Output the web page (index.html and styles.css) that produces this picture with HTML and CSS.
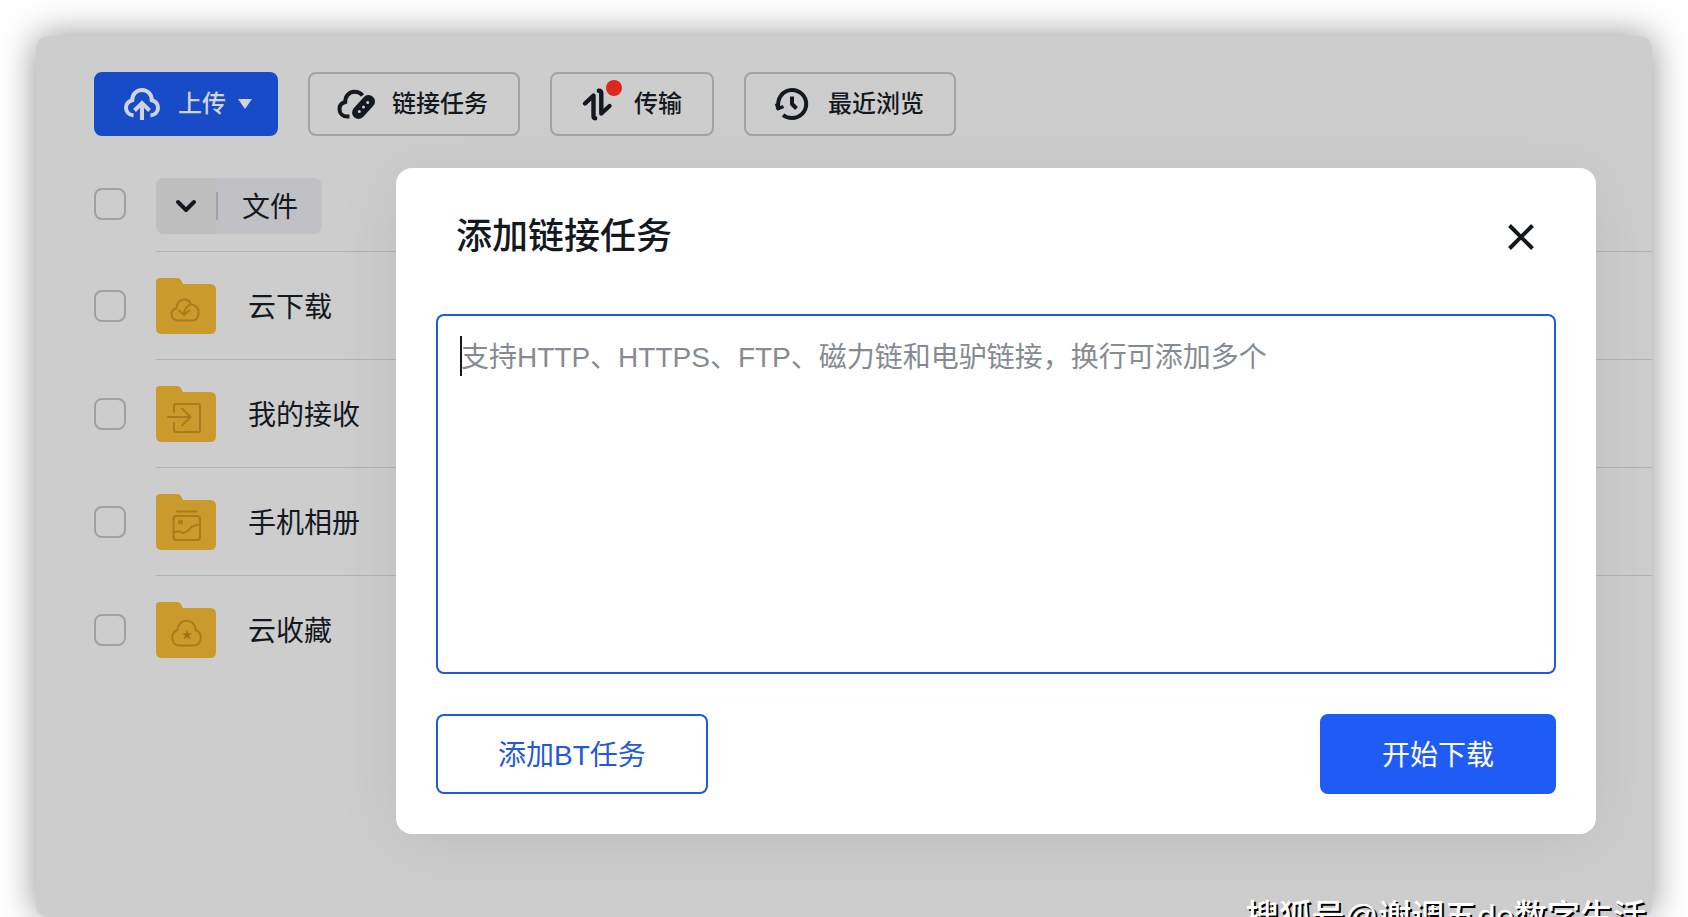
FILE: index.html
```html
<!DOCTYPE html>
<html lang="zh-CN">
<head>
<meta charset="utf-8">
<meta name="viewport" content="width=device-width, initial-scale=1">
<title>添加链接任务</title>
<link rel="stylesheet" href="styles.css">
</head>
<body>
<div class="window">
  <nav class="toolbar">
    <button class="tool tool-primary" type="button">
      <svg class="icon" viewBox="0 0 36 36" fill="none" stroke="currentColor" stroke-width="4">
        <path d="M9.500 29.600C5 29 2 25.800 2 21.800C2 18 4.600 15 8.200 14.200C8.200 8.200 12.400 3.900 18 3.900C23.600 3.900 27.800 8.200 27.800 14.200C31.400 15 34 18 34 21.800C34 25.800 31 29 26.500 29.600"/>
        <path d="M18 34V18.500M10.500 24.500L18 17L25.500 24.500"/>
      </svg>
      <span>上传</span>
      <svg class="caret" viewBox="0 0 16 12"><path d="M0 1H14L7 11Z" fill="currentColor"/></svg>
    </button>
    <button class="tool" type="button">
      <svg class="icon" viewBox="0 0 36 36" fill="none" stroke="currentColor" stroke-width="4">
        <path d="M11.500 30.500H9.500C5 30.500 1.500 27.500 1.500 23.200C1.500 19.200 4.200 16.700 7.200 16C7.200 10 11.300 5.800 16.500 5.800C20 5.800 22.800 7.200 24.500 9.500"/>
        <path d="M20.500 26.500L30.500 15.500" stroke-width="13" stroke-linecap="round"/>
        <path class="bead" d="M29.700 16.400V16.400M25.500 21V21M21.300 25.600V25.600"/>
      </svg>
      <span>链接任务</span>
    </button>
    <button class="tool" type="button">
      <span class="icon-wrap">
        <svg class="icon" viewBox="0 0 36 36" fill="none" stroke="currentColor" stroke-width="4.400" stroke-linejoin="round" stroke-linecap="round">
          <path d="M5 17.500L13.500 9.500V29.500C13.500 31.500 14 32.200 15.200 32.200"/>
          <path d="M18.800 4.800C20.500 4.800 21.300 5.500 21.300 7.500V27.500L29.500 20"/>
        </svg>
        <span class="dot"></span>
      </span>
      <span>传输</span>
    </button>
    <button class="tool" type="button">
      <svg class="icon" viewBox="0 0 36 36" fill="none" stroke="currentColor" stroke-width="4" stroke-linejoin="round">
        <path d="M4.500 22.500C2.500 13 8.500 4 18 4C26 4 32.200 10.300 32.200 18C32.200 25.700 26 32 18 32C14.500 32 11.500 31 9 29"/>
        <path d="M2.500 17.500L4 22.800L9.500 20.500" stroke-width="3.400"/>
        <path d="M18 10.500V18L22.500 22.500"/>
      </svg>
      <span>最近浏览</span>
    </button>
  </nav>

  <main class="files">
    <div class="row row-head">
      <input class="check" type="checkbox" aria-label="全选">
      <div class="cell">
        <div class="crumb">
          <button class="crumb-toggle" type="button" aria-label="展开">
            <svg class="chevron" viewBox="0 0 24 16" fill="none" stroke="currentColor" stroke-width="4"><path d="M4 4L12 12L20 4" stroke-linecap="round" stroke-linejoin="round"/></svg>
          </button>
          <button class="crumb-name" type="button">文件</button>
        </div>
      </div>
    </div>
    <div class="row">
      <input class="check" type="checkbox" id="f1">
      <label class="cell" for="f1">
        <svg class="folder" viewBox="0 0 60 56"><path class="folder-body" d="M0 4Q0 0 4 0H21Q24 0 25.500 3L27 6H54Q60 6 60 12V50Q60 56 54 56H6Q0 56 0 50Z"/>
          <g class="folder-mark"><path d="M31 29C33 26.500 36 26 38.500 27.500C42 29.500 43 33 42.500 36C42 40 39.500 42.500 36 42.500H22.500C18.500 42.500 15.500 40 15.500 36.500C15.500 33.500 17.500 31 20.500 30.500C20.500 25.500 23.500 21.500 28 21.500C31.500 21.500 34 23.500 35 26.500"/><path d="M31 29C29 30.500 28 32.500 28 37M23 32.500L28 37L33 32.500"/></g></svg>
        <span class="name">云下载</span>
      </label>
    </div>
    <div class="row">
      <input class="check" type="checkbox" id="f2">
      <label class="cell" for="f2">
        <svg class="folder" viewBox="0 0 60 56"><path class="folder-body" d="M0 4Q0 0 4 0H21Q24 0 25.500 3L27 6H54Q60 6 60 12V50Q60 56 54 56H6Q0 56 0 50Z"/>
          <g class="folder-mark"><path d="M18 26V20Q18 18 20 18H42Q44 18 44 20V44Q44 46 42 46H20Q18 46 18 44V37"/><path d="M12 31H34M26 22.500L34.500 31L26 39.500"/></g></svg>
        <span class="name">我的接收</span>
      </label>
    </div>
    <div class="row">
      <input class="check" type="checkbox" id="f3">
      <label class="cell" for="f3">
        <svg class="folder" viewBox="0 0 60 56"><path class="folder-body" d="M0 4Q0 0 4 0H21Q24 0 25.500 3L27 6H54Q60 6 60 12V50Q60 56 54 56H6Q0 56 0 50Z"/>
          <g class="folder-mark"><path d="M21 17.500H41"/><rect x="17.500" y="22" width="26.500" height="24" rx="3"/><path d="M18 38.500C22 36.500 24 37 27 39C31 38.500 33 36 35 33.500C37.500 31.500 40 31 44 30.500"/><circle cx="24.500" cy="28" r="1.500"/></g></svg>
        <span class="name">手机相册</span>
      </label>
    </div>
    <div class="row row-last">
      <input class="check" type="checkbox" id="f4">
      <label class="cell" for="f4">
        <svg class="folder" viewBox="0 0 60 56"><path class="folder-body" d="M0 4Q0 0 4 0H21Q24 0 25.500 3L27 6H54Q60 6 60 12V50Q60 56 54 56H6Q0 56 0 50Z"/>
          <g class="folder-mark"><path d="M21.500 28C21.500 22.500 25.500 18.700 30.500 18.700C35.500 18.700 39.500 22.500 39.500 28C43 29.500 45 32.500 44.800 36C44.500 40.500 41.500 43.500 37.500 43.500H23.500C19.500 43.500 16.500 40.500 16.200 36C16 32.500 18 29.500 21.500 28Z"/></g>
          <path class="folder-star" d="M31 27.500L32.300 31.200L36 31.300L33.100 33.600L34.100 37.300L31 35.200L27.900 37.300L28.900 33.600L26 31.300L29.700 31.200Z"/></svg>
        <span class="name">云收藏</span>
      </label>
    </div>
  </main>

  <div class="overlay">
    <section class="modal" role="dialog" aria-labelledby="dialog-title">
      <header class="modal-head">
        <h1 class="modal-title" id="dialog-title">添加链接任务</h1>
        <button class="close" type="button" aria-label="关闭">
          <svg class="close-icon" viewBox="0 0 28 28" fill="none" stroke="currentColor" stroke-width="4"><path d="M2.500 2.500L25.500 25.500M25.500 2.500L2.500 25.500"/></svg>
        </button>
      </header>
      <div class="field">
        <textarea class="links" aria-labelledby="dialog-title" placeholder="支持HTTP、HTTPS、FTP、磁力链和电驴链接，换行可添加多个"></textarea>
        <span class="cursor"></span>
      </div>
      <footer class="modal-foot">
        <button class="action action-outline" type="button">添加BT任务</button>
        <button class="action action-solid" type="button">开始下载</button>
      </footer>
    </section>
  </div>
</div>
<div class="watermark">搜狐号@谢调五de数字生活</div>
</body>
</html>
```

FILE: styles.css
```css
* {
  box-sizing: border-box;
}

body {
  margin: 0;
  height: 100vh;
  padding: 36px 36px 0;
  position: relative;
  overflow: hidden;
  background: #fff;
  color: #14181f;
  font-family: "Liberation Sans", "Noto Sans CJK SC", sans-serif;
  font-size: 28px;
  line-height: 40px;
}

button,
textarea {
  font: inherit;
  color: inherit;
}

button {
  margin: 0;
  border: 0;
  padding: 0;
  background: none;
}

svg {
  display: block;
  flex: none;
  overflow: visible;
}

.window {
  position: relative;
  height: 100%;
  padding: 36px 0 0 58px;
  border-radius: 12px;
  background: #cdcdcd;
  box-shadow: 0 0 36px rgba(0, 0, 0, 0.44);
}

.toolbar {
  display: flex;
  gap: 30px;
}

.tool {
  display: flex;
  align-items: center;
  gap: 18px;
  height: 64px;
  padding: 0 30px 0 28px;
  border: 2px solid #a3a3a3;
  border-radius: 8px;
  font-size: 24px;
  font-weight: 500;
  white-space: nowrap;
}

.tool-primary {
  padding-right: 22px;
  border-color: #184bc8;
  background: #184bc8;
  color: #d0d4e0;
}

.icon {
  width: 36px;
  height: 36px;
}

.bead {
  stroke: #cdcdcd;
  stroke-width: 3;
  stroke-linecap: round;
}

.icon-wrap {
  position: relative;
}

.dot {
  position: absolute;
  top: -6px;
  right: -6px;
  width: 16px;
  height: 16px;
  border-radius: 50%;
  background: #dc291e;
}

.caret {
  width: 16px;
  height: 12px;
  margin-left: -6px;
}

.row {
  display: flex;
  align-items: center;
  gap: 30px;
  height: 108px;
}

.row-head {
  height: 116px;
}

.check {
  appearance: none;
  flex: none;
  width: 32px;
  height: 32px;
  margin: 0;
  border: 2px solid #a0a0a0;
  border-radius: 8px;
}

.cell {
  flex: 1;
  align-self: stretch;
  display: flex;
  align-items: center;
  gap: 32px;
  padding-top: 1px;
  border-bottom: 1px solid #b2b2b2;
}

.name {
  padding-top: 3px;
}

.row-head .check {
  margin-top: 20px;
}

.row-head .cell {
  padding-top: 25px;
}

.row-last .cell {
  border-bottom-color: transparent;
}

.crumb {
  display: flex;
  align-items: center;
  height: 56px;
  border-radius: 8px;
  overflow: hidden;
  background: #c1c1c5;
}

.crumb-toggle {
  display: grid;
  place-items: center;
  width: 60px;
  height: 100%;
  background: #bebebe;
}

.chevron {
  width: 24px;
  height: 16px;
}

.crumb-name {
  height: 28px;
  padding: 2px 24px 0;
  border-left: 2px solid #a3a3a6;
  line-height: 28px;
}

.folder {
  width: 60px;
  height: 56px;
}

.folder-body {
  fill: #cb9a2c;
}

.folder-mark {
  fill: none;
  stroke: #a97c1b;
  stroke-width: 2;
  stroke-linecap: round;
  stroke-linejoin: round;
}

.folder-star {
  fill: #a07418;
}

.overlay {
  position: absolute;
  inset: 0;
  padding: 132px 56px 0 360px;
}

.modal {
  padding: 40px;
  border-radius: 16px;
  background: #fff;
  box-shadow: 0 8px 64px rgba(0, 0, 0, 0.08);
}

.modal-head {
  display: flex;
  align-items: center;
  justify-content: space-between;
  height: 58px;
  margin-bottom: 48px;
  padding: 0 21px 0 20px;
}

.modal-title {
  margin: 0;
  font-size: 36px;
  font-weight: 500;
  line-height: 58px;
}

.close-icon {
  width: 28px;
  height: 28px;
}

.field {
  position: relative;
}

.links {
  display: block;
  width: 100%;
  height: 360px;
  padding: 20px 23px;
  border: 2px solid #2458dc;
  border-radius: 8px;
  outline: 0;
  resize: none;
  background: #fff;
  line-height: 44px;
}

.links::placeholder {
  color: #868b91;
  opacity: 1;
}

.cursor {
  position: absolute;
  top: 22px;
  left: 24px;
  width: 2px;
  height: 40px;
  background: #14181f;
}

.modal-foot {
  display: flex;
  justify-content: space-between;
  margin-top: 40px;
}

.action {
  height: 80px;
  padding: 3px 60px 0;
  border: 2px solid #2458dc;
  border-radius: 8px;
  white-space: nowrap;
}

.action-outline {
  color: #2458dc;
}

.action-solid {
  border-color: #1f5cf5;
  background: #1f5cf5;
  color: #fff;
}

.watermark {
  position: absolute;
  right: 42px;
  bottom: -25px;
  color: #fff;
  font-size: 33px;
  font-weight: 500;
  line-height: 50px;
  text-shadow: 2px 2px 0 #000;
  white-space: nowrap;
}
```
